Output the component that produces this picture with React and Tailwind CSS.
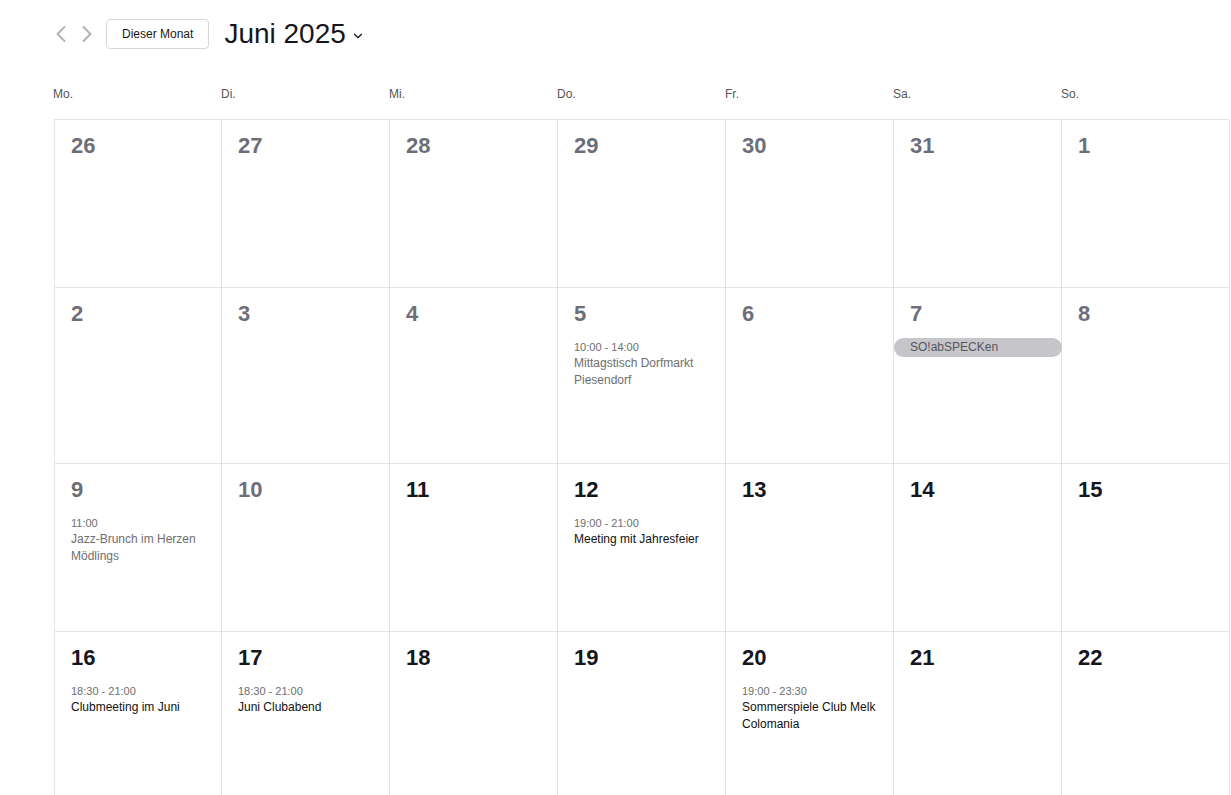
import { ChevronLeft, ChevronRight, ChevronDown } from "lucide-react";

const days = ["Mo.", "Di.", "Mi.", "Do.", "Fr.", "Sa.", "So."];

const weeks = [
  {
    h: "h-[168px]",
    cells: [
      { d: 26, past: true },
      { d: 27, past: true },
      { d: 28, past: true },
      { d: 29, past: true },
      { d: 30, past: true },
      { d: 31, past: true },
      { d: 1, past: true },
    ],
  },
  {
    h: "h-[176px]",
    cells: [
      { d: 2, past: true },
      { d: 3, past: true },
      { d: 4, past: true },
      { d: 5, past: true, ev: { time: "10:00 - 14:00", title: "Mittagstisch Dorfmarkt Piesendorf" } },
      { d: 6, past: true },
      { d: 7, past: true, pill: "SO!abSPECKen" },
      { d: 8, past: true },
    ],
  },
  {
    h: "h-[168px]",
    cells: [
      { d: 9, past: true, ev: { time: "11:00", title: "Jazz-Brunch im Herzen Mödlings" } },
      { d: 10, past: true },
      { d: 11 },
      { d: 12, ev: { time: "19:00 - 21:00", title: "Meeting mit Jahresfeier" } },
      { d: 13 },
      { d: 14 },
      { d: 15 },
    ],
  },
  {
    h: "h-[168px]",
    cells: [
      { d: 16, ev: { time: "18:30 - 21:00", title: "Clubmeeting im Juni" } },
      { d: 17, ev: { time: "18:30 - 21:00", title: "Juni Clubabend" } },
      { d: 18 },
      { d: 19 },
      { d: 20, ev: { time: "19:00 - 23:30", title: "Sommerspiele Club Melk Colomania" } },
      { d: 21 },
      { d: 22 },
    ],
  },
];

function Cell({ c }) {
  return (
    <div className="relative border-r border-b border-[#e3e3e3] pt-[13px]">
      <div
        className={
          "px-4 text-[22px] font-bold leading-[26px] " +
          (c.past ? "text-[#6e6e78]" : "text-[#16161d]")
        }
      >
        {c.d}
      </div>
      {c.ev && (
        <div className="mt-[13px] px-4">
          <div className="text-[11px] leading-[14px] text-[#6e6e6e]">{c.ev.time}</div>
          <div
            className={
              "mt-[1px] text-[12px] leading-[17px] " +
              (c.past ? "text-[#6e6e6e]" : "text-[#111]")
            }
          >
            {c.ev.title}
          </div>
        </div>
      )}
      {c.pill && (
        <div className="-mr-px mt-[11px] h-[19px] rounded-full bg-[#c6c6ca] pl-4 text-[12px] leading-[19px] text-[#55555c]">
          {c.pill}
        </div>
      )}
    </div>
  );
}

export default function App() {
  return (
    <div className="min-h-screen bg-white font-['Liberation_Sans',Arial,sans-serif]">
      <div className="flex h-[69px] items-center pl-[47px] pb-[1px]">
        <ChevronLeft className="h-[28px] w-[28px] text-[#b0b0b0]" strokeWidth={1.6} />
        <ChevronRight className="-ml-[2px] h-[28px] w-[28px] text-[#b0b0b0]" strokeWidth={1.6} />
        <button className="ml-[5px] h-[30px] rounded-[4px] border border-[#d6d6d6] px-[15px] text-[12px] text-[#1a1a1a]">
          Dieser Monat
        </button>
        <span className="ml-[15px] text-[28px] leading-none text-[#16161d]">Juni 2025</span>
        <ChevronDown className="ml-[5px] mt-[3px] h-[14px] w-[14px] text-[#16161d]" strokeWidth={2} />
      </div>
      <div className="ml-[53px] grid w-[1176px] grid-cols-7 pb-[18px] pt-[18px]">
        {days.map((d) => (
          <div key={d} className="text-[12px] leading-[14px] text-[#555]">
            {d}
          </div>
        ))}
      </div>
      <div className="ml-[54px] w-[1175px] border-l border-t border-[#e3e3e3]">
        {weeks.map((w, i) => (
          <div key={i} className={"grid grid-cols-[167px_repeat(6,168px)] " + w.h}>
            {w.cells.map((c) => (
              <Cell key={c.d} c={c} />
            ))}
          </div>
        ))}
      </div>
    </div>
  );
}
